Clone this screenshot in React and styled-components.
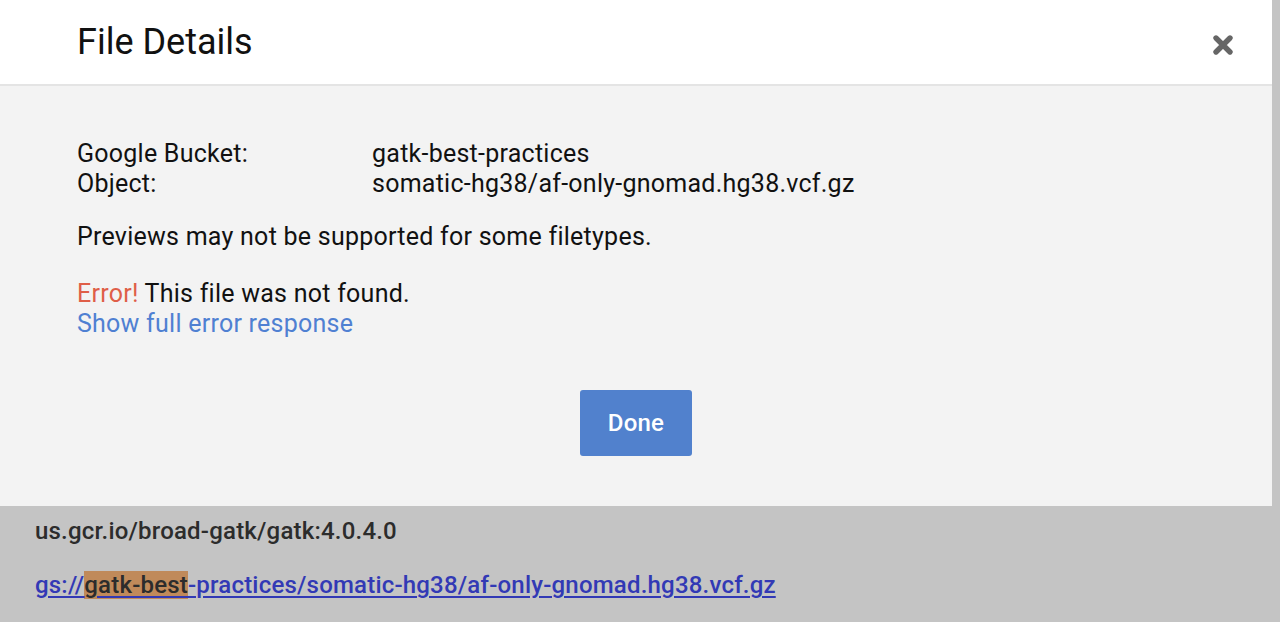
import React from "react";
import styled, { createGlobalStyle } from "styled-components";

const GlobalStyle = createGlobalStyle`
  html, body { margin: 0; padding: 0; }
  body {
    background: #c4c4c4;
    font-family: Roboto, "Noto Sans", Arial, sans-serif;
    overflow: hidden;
  }
`;

const Page = styled.div`
  display: flex;
  flex-direction: column;
  min-height: 622px;
`;

const Modal = styled.div`
  width: 1272px;
  display: flex;
  flex-direction: column;
`;

const Header = styled.header`
  height: 86px;
  box-sizing: border-box;
  background: #ffffff;
  border-bottom: 2px solid #e4e4e4;
  display: flex;
  align-items: flex-start;
  justify-content: space-between;
  padding: 21px 38px 0 77px;
`;

const Title = styled.h1`
  margin: 0;
  font-size: 36px;
  line-height: 42px;
  font-weight: 400;
  color: #111;
`;

const CloseButton = styled.button`
  margin-top: 13px;
  width: 22px;
  height: 22px;
  padding: 0;
  border: 0;
  background: transparent;
  display: flex;
  align-items: center;
  justify-content: center;
  cursor: pointer;
`;

const Body = styled.div`
  background: #f3f3f3;
  padding: 53px 77px 50px 77px;
  display: flex;
  flex-direction: column;
  font-size: 25px;
  letter-spacing: 0.25px;
  line-height: 30px;
  color: #111;
`;

const InfoGrid = styled.div`
  display: grid;
  grid-template-columns: 295px auto;
  margin-bottom: 23px;
`;

const Paragraph = styled.p`
  margin: 0 0 ${(p) => p.$mb || 0}px 0;
`;

const ErrorLabel = styled.span`
  color: #df5e48;
`;

const TextLink = styled.a`
  color: #4f80d2;
  text-decoration: none;
  cursor: pointer;
`;

const Footer = styled.div`
  display: flex;
  justify-content: center;
  margin-top: 51px;
`;

const PrimaryButton = styled.button`
  width: 112px;
  height: 66px;
  border: 0;
  border-radius: 3px;
  background: #5181cd;
  color: #fff;
  font-family: Roboto, "Noto Sans", Arial, sans-serif;
  font-size: 24px;
  letter-spacing: 0.2px;
  font-weight: 500;
  cursor: pointer;
`;

const Behind = styled.div`
  padding: 12px 0 0 35px;
  display: flex;
  flex-direction: column;
  gap: 28px;
  font-size: 24px;
  letter-spacing: 0.2px;
  line-height: 26px;
`;

const ImageName = styled.div`
  color: #2c2c2c;
  font-weight: 500;
`;

const BucketLink = styled.a`
  color: #3239b5;
  font-weight: 500;
  text-decoration: underline;
  text-decoration-thickness: 2px;
  text-underline-offset: 3px;
`;

const Highlight = styled.mark`
  background: #c08a5a;
  color: #2c2c2c;
`;

function CloseIcon() {
  return (
    <svg width="22" height="22" viewBox="0 0 22 22">
      <path
        d="M4 4 L18 18 M18 4 L4 18"
        stroke="#666"
        strokeWidth="5.4"
        strokeLinecap="round"
      />
    </svg>
  );
}

export default function App() {
  return (
    <>
      <GlobalStyle />
      <Page>
        <Modal>
          <Header>
            <Title>File Details</Title>
            <CloseButton aria-label="Close">
              <CloseIcon />
            </CloseButton>
          </Header>
          <Body>
            <InfoGrid>
              <span>Google Bucket:</span>
              <span>gatk-best-practices</span>
              <span>Object:</span>
              <span>somatic-hg38/af-only-gnomad.hg38.vcf.gz</span>
            </InfoGrid>
            <Paragraph $mb={27}>Previews may not be supported for some filetypes.</Paragraph>
            <Paragraph>
              <ErrorLabel>Error!</ErrorLabel> This file was not found.
            </Paragraph>
            <Paragraph>
              <TextLink>Show full error response</TextLink>
            </Paragraph>
            <Footer>
              <PrimaryButton>Done</PrimaryButton>
            </Footer>
          </Body>
        </Modal>
        <Behind>
          <ImageName>us.gcr.io/broad-gatk/gatk:4.0.4.0</ImageName>
          <div>
            <BucketLink>
              gs://<Highlight>gatk-best</Highlight>-practices/somatic-hg38/af-only-gnomad.hg38.vcf.gz
            </BucketLink>
          </div>
        </Behind>
      </Page>
    </>
  );
}
